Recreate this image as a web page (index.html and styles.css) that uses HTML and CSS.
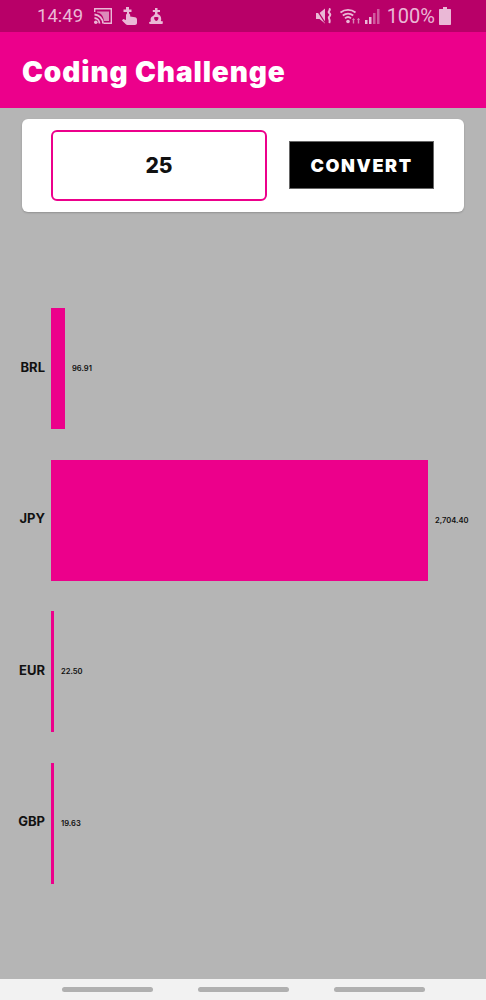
FILE: index.html
```html
<!DOCTYPE html>
<html lang="en">
<head>
  <meta charset="UTF-8" />
  <title>Coding Challenge</title>
  <link rel="stylesheet" href="styles.css">
</head>
<body>
  <div class="status-bar">
    <div class="status-group">
      <span class="clock">14:49</span>
      <svg class="icon" width="18" height="16" viewBox="0 0 18 16">
        <path d="M0.500 4V1.700c0-.7.5-1.200 1.200-1.200h14.600c.7 0 1.200.5 1.200 1.200v12.600c0 .7-.5 1.200-1.200 1.200H9.500" stroke="#eab8d6" stroke-width="1.800" fill="none"/>
        <path d="M3 3.500h12v9.500H10C9.500 8 7 5 3 4.500z" fill="#eab8d6" opacity="0.75"/>
        <path d="M0.500 6.500a9 9 0 0 1 8.500 9M0.500 10a5.500 5.500 0 0 1 5 5.500" stroke="#eab8d6" stroke-width="1.800" fill="none"/>
        <circle cx="1.800" cy="14.200" r="1.800" fill="#eab8d6"/>
      </svg>
      <svg class="icon" width="16" height="18" viewBox="0 0 16 18">
        <path d="M5 0h3v2.500h2.500V5H8v1.500c.8.300 1.200 1 1.200 1.800v1.200l4.800.8c1.200.2 2 1.200 2 2.400V16c0 1.100-.9 2-2 2H6.500c-.7 0-1.200-.3-1.700-.8L1 13.500l1.200-1.500 2.800 1V8.300c0-.8.4-1.400 1-1.800V5H2.500V2.500H5z" fill="#eab8d6"/>
      </svg>
      <svg class="icon third" width="14" height="16" viewBox="0 0 14 16">
        <path d="M6 0h2.500v2H11v2H8.500v2c2.300.6 3.700 2.500 3.700 5 0 .7-.1 1.300-.4 1.900l2.200.6-.5 2.500H.5L0 14.200l2-.9C1.700 12.700 1.600 12 1.600 11.400c0-1.600 1-3 2.500-3.500L6 6V4H3.800V2H6z" fill="#eab8d6"/>
        <path d="M5 9.500c1.500-.6 3-.6 4.500 0-.2 2-.5 3-2.200 3.500-1.500-.5-2.100-1.500-2.300-3.500z" fill="#b80068"/>
      </svg>
    </div>
    <div class="status-group status-right">
      <svg class="icon mute" width="17" height="16" viewBox="0 0 17 16">
        <path d="M0 5h3.500L9 .5v15L3.500 11H0z" fill="#eab8d6"/>
        <path d="M0 .5l9 14" stroke="#b80068" stroke-width="1.300"/>
        <path d="M13 .5c2.500 1.700-1.500 2.700 0 4.200s1.800 2.500.2 4 1.800 3 0 6.300" stroke="#eab8d6" stroke-width="2" fill="none"/>
      </svg>
      <svg class="icon wifi" width="20" height="16" viewBox="0 0 20 16">
        <path d="M0.500 4.500a12 12 0 0 1 15 0M2.800 7.500a8.500 8.500 0 0 1 10.400 0M5 10.300a4.500 4.500 0 0 1 6 0" stroke="#eab8d6" stroke-width="1.800" fill="none"/>
        <circle cx="8" cy="13.500" r="1.800" fill="#eab8d6"/>
        <path d="M13.500 15.500v-4m5 4v-5" stroke="#d884b6" stroke-width="1.400"/>
        <path d="M12 12l1.500-2 1.500 2zm5 0l1.500-2 1.500 2z" fill="#d884b6"/>
      </svg>
      <svg class="icon signal" width="15" height="15" viewBox="0 0 15 15">
        <rect x="0" y="11" width="2.500" height="4" fill="#eab8d6"/>
        <rect x="4" y="8" width="2.500" height="7" fill="#eab8d6"/>
        <rect x="8" y="4" width="2.500" height="11" fill="#d05a9e"/>
        <rect x="12" y="0" width="2.500" height="15" fill="#d05a9e"/>
      </svg>
      <span class="battery-text">100%</span>
      <svg class="icon" width="12" height="18" viewBox="0 0 12 18">
        <path d="M4 0h4v2h3c.6 0 1 .4 1 1v14c0 .6-.4 1-1 1H1c-.6 0-1-.4-1-1V3c0-.6.4-1 1-1h3z" fill="#eab8d6"/>
      </svg>
    </div>
  </div>

  <header class="app-bar">
    <h1>Coding Challenge</h1>
  </header>

  <main class="content">
    <section class="card">
      <input class="amount" type="text" value="25">
      <button class="convert">CONVERT</button>
    </section>

    <section class="chart">
      <div class="row">
        <span class="code">BRL</span>
        <div class="bar" style="width: 14px"></div>
        <span class="value">96.91</span>
      </div>
      <div class="row">
        <span class="code">JPY</span>
        <div class="bar" style="width: 377px"></div>
        <span class="value">2,704.40</span>
      </div>
      <div class="row">
        <span class="code">EUR</span>
        <div class="bar" style="width: 3px"></div>
        <span class="value">22.50</span>
      </div>
      <div class="row">
        <span class="code">GBP</span>
        <div class="bar" style="width: 3px"></div>
        <span class="value">19.63</span>
      </div>
    </section>
  </main>

  <nav class="nav-bar">
    <span class="pill"></span>
    <span class="pill"></span>
    <span class="pill"></span>
  </nav>
</body>
</html>
```

FILE: styles.css
```css
* {
  box-sizing: border-box;
}

body {
  margin: 0;
  height: 1000px;
  display: flex;
  flex-direction: column;
  font-family: "Inter", "Liberation Sans", sans-serif;
  background-color: #b5b5b5;
  overflow: hidden;
}

.status-bar {
  height: 32px;
  flex-shrink: 0;
  display: flex;
  justify-content: space-between;
  align-items: center;
  padding: 0 35px 0 37px;
  background-color: #b80068;
  color: #eab8d6;
  font-family: "Roboto", sans-serif;
}

.status-group {
  display: flex;
  align-items: center;
  gap: 9px;
}

.status-right {
  gap: 5px;
}

.clock {
  margin-right: 2px;
  font-size: 18.5px;
}

.battery-text {
  margin: 0 -1px 0 2px;
  font-size: 20px;
}

.icon {
  display: block;
}

.third {
  margin-left: 3px;
}

.mute {
  margin-right: 2px;
}

.app-bar {
  height: 76px;
  flex-shrink: 0;
  display: flex;
  align-items: center;
  padding: 3px 22px 0;
  background-color: #ec008b;
}

.app-bar h1 {
  margin: 0;
  color: white;
  font-size: 28px;
  font-weight: 900;
  letter-spacing: 0.9px;
}

.content {
  flex: 1;
  padding-top: 11px;
}

.card {
  height: 93px;
  margin: 0 22px;
  display: flex;
  align-items: center;
  gap: 22px;
  padding: 0 29px;
  background: white;
  border-radius: 6px;
  box-shadow: 0 1px 2px rgba(0, 0, 0, 0.2);
}

.amount {
  width: 216px;
  height: 71px;
  padding: 0;
  border: 2.5px solid #ec008b;
  border-radius: 6px;
  text-align: center;
  font-family: inherit;
  font-size: 21px;
  font-weight: 800;
  color: #111;
}

.convert {
  width: 145px;
  height: 48px;
  margin-bottom: 1px;
  padding: 0;
  background-color: black;
  border: 1px solid #666;
  color: white;
  font-family: inherit;
  font-size: 18px;
  font-weight: 900;
  letter-spacing: 1.6px;
}

.chart {
  margin-top: 96px;
  display: flex;
  flex-direction: column;
  gap: 30.67px;
}

.row {
  height: 121px;
  display: flex;
  align-items: center;
}

.code {
  width: 45px;
  margin: 0 6px 4px 0;
  text-align: right;
  font-size: 13px;
  font-weight: 700;
  color: #111;
}

.bar {
  height: 121px;
  background-color: #ec008b;
}

.value {
  margin-left: 7px;
  font-size: 7.6px;
  font-weight: 600;
  color: #111;
}

.nav-bar {
  height: 21px;
  flex-shrink: 0;
  display: flex;
  justify-content: center;
  align-items: center;
  gap: 45px;
  background-color: #f2f2f2;
}

.pill {
  width: 91px;
  height: 5px;
  border-radius: 3px;
  background-color: #b0b0b0;
}
```
